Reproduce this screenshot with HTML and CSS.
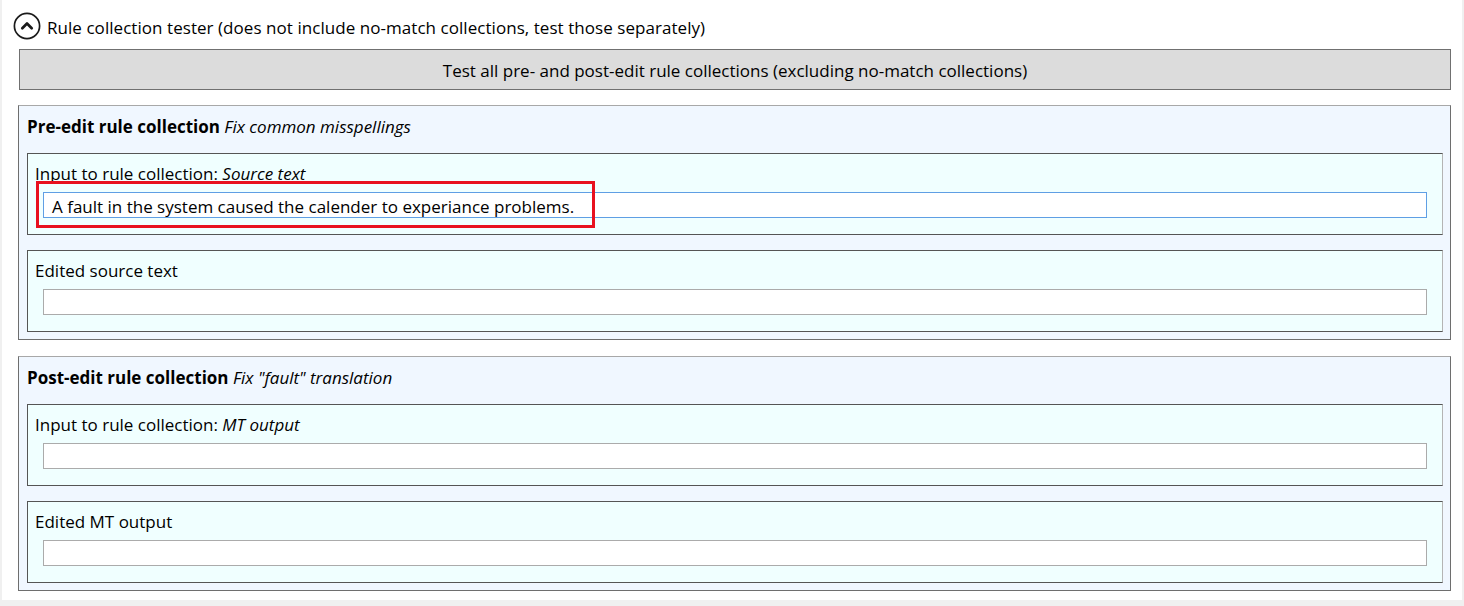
FILE: index.html
```html
<!DOCTYPE html>
<html>
<head>
<meta charset="utf-8">
<link rel="stylesheet" href="styles.css">
</head>
<body>
<div class="panel">
  <div class="header">
    <svg class="toggle" width="28" height="28" viewBox="0 0 28 28">
      <circle cx="14" cy="14" r="12.6" fill="#fff" stroke="#1a1a1a" stroke-width="1.7"/>
      <path d="M9.3 16.2 L14 11.5 L18.7 16.2" fill="none" stroke="#1a1a1a" stroke-width="2.7" stroke-linecap="round" stroke-linejoin="round"/>
    </svg>
    <span class="header-text">Rule collection tester (does not include no-match collections, test those separately)</span>
  </div>
  <div class="test-btn">Test all pre- and post-edit rule collections (excluding no-match collections)</div>

  <div class="section">
    <div class="section-title"><b>Pre-edit rule collection</b> <i>Fix common misspellings</i></div>
    <div class="box">
      <div class="label">Input to rule collection: <i>Source text</i></div>
      <div class="field focused">A fault in the system caused the calender to experiance problems.</div>
      <div class="highlight"></div>
    </div>
    <div class="box">
      <div class="label">Edited source text</div>
      <div class="field"></div>
    </div>
  </div>

  <div class="section">
    <div class="section-title"><b>Post-edit rule collection</b> <i>Fix "fault" translation</i></div>
    <div class="box">
      <div class="label">Input to rule collection: <i>MT output</i></div>
      <div class="field"></div>
    </div>
    <div class="box">
      <div class="label">Edited MT output</div>
      <div class="field"></div>
    </div>
  </div>
</div>
</body>
</html>
```
FILE: styles.css
```css
html, body {
  margin: 0;
  padding: 0;
}
body {
  background: #f0f0f0;
  font-family: "Open Sans", "Noto Sans", "Liberation Sans", sans-serif;
  font-size: 17px;
  color: #000;
  width: 1464px;
  height: 606px;
  overflow: hidden;
}
.panel {
  background: #fff;
  margin-left: 2px;
  width: 1460px;
  height: 600px;
  box-sizing: border-box;
  padding: 12px 11px 0 16px;
}
.header {
  display: flex;
  align-items: center;
  height: 28px;
  margin-left: -5px;
}
.toggle {
  display: block;
  flex: none;
}
.header-text {
  margin-left: 6px;
  line-height: 22px;
  padding-top: 3px;
  letter-spacing: 0.05px;
}
.test-btn {
  margin: 9px 0 0 1px;
  height: 38px;
  padding-top: 1px;
  line-height: 39px;
  text-align: center;
  background: #dcdcdc;
  border: 1px solid #707070;
}
.section {
  margin-top: 15px;
  background: #f0f7ff;
  border: 1px solid #6e6e6e;
  border-top-color: #a8a8a8;
  padding: 0 7px 7px 8px;
}
.section + .section {
  margin-top: 16px;
}
.section-title {
  padding-top: 10px;
  line-height: 22px;
  height: 22px;
  margin-bottom: 15px;
}
.box {
  position: relative;
  background: #f0ffff;
  border: 1px solid #555;
  border-right-color: #b4b4b4;
  padding: 8px 15px 16px 7px;
}
.box + .box {
  margin-top: 15px;
}
.label {
  line-height: 22px;
  height: 21px;
  padding-top: 1px;
}
.field {
  margin: 8px 0 0 8px;
  height: 22px;
  padding: 2px 8px 0 8px;
  line-height: 24px;
  background: #fff;
  border: 1px solid #ababab;
  white-space: nowrap;
}
.field.focused {
  border-color: #5f9fe4;
}
.highlight {
  position: absolute;
  left: 8px;
  top: 27px;
  width: 553px;
  height: 41px;
  border: 3px solid #e8111f;
}
```
